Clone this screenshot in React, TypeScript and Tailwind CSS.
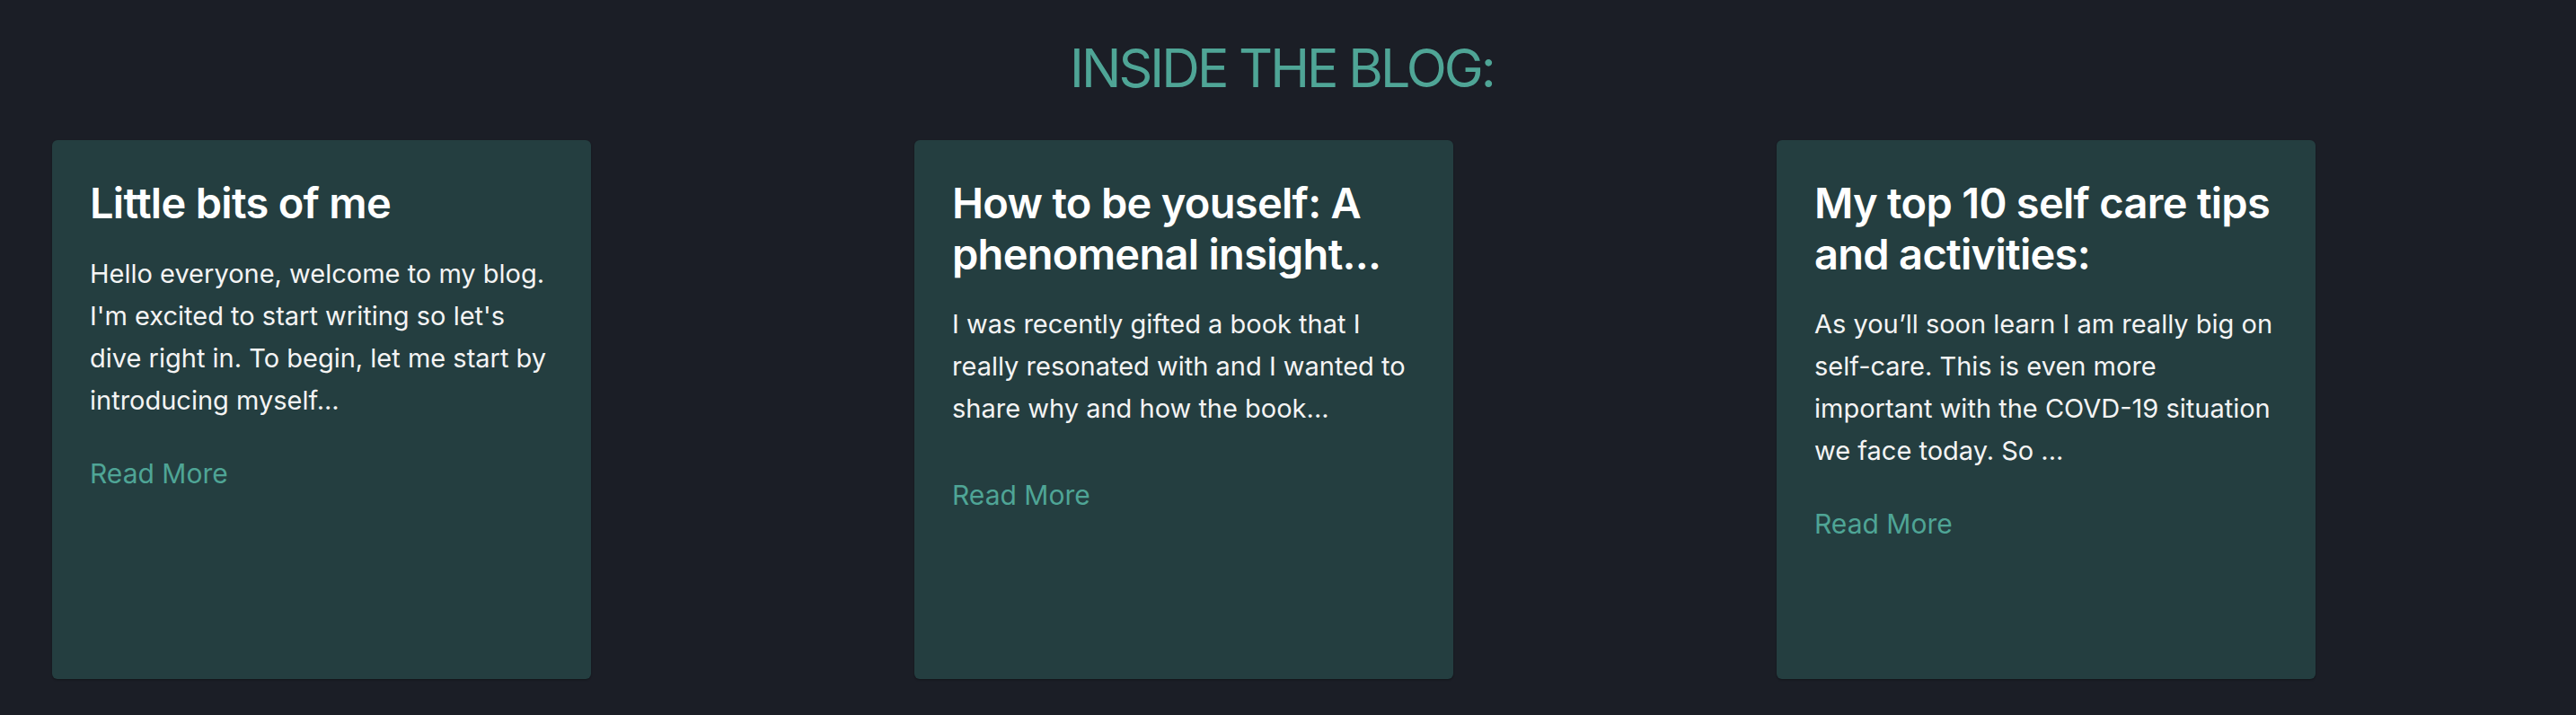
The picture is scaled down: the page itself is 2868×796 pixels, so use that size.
import React from 'react'

interface Post {
  id: number;
  title: string;
  excerpt: string;
  excerptClass: string;
}

const posts: Post[] = [
  {
    id: 1,
    title: "Little bits of me",
    excerpt:
      "Hello everyone, welcome to my blog. I'm excited to start writing so let's dive right in. To begin, let me start by introducing myself...",
    excerptClass: "mb-[36px]",
  },
  {
    id: 2,
    title: "How to be youself: A phenomenal insight...",
    excerpt:
      "I was recently gifted a book that I really resonated with and I wanted to share why and how the book...",
    excerptClass: "mb-[51px]",
  },
  {
    id: 3,
    title: "My top 10 self care tips and activities:",
    excerpt:
      "As you’ll soon learn I am really big on self-care. This is even more important with the COVD-19 situation we face today. So ...",
    excerptClass: "mb-[36px]",
  },
];

const App = () => {
  return (
    <div className="min-h-[796px] w-full overflow-hidden bg-[#1b1e26] pt-[46px] pb-[41px] font-['Inter','Noto_Sans',sans-serif]">
      <h2 className="pr-[14px] text-center text-[59px] leading-[60px] font-normal tracking-[-0.05em] text-[#4fa596]">
        INSIDE THE BLOG:
      </h2>
      <div className="mt-[50px] flex gap-[360px] pl-[58px]">
        {posts.map((post) => (
          <div
            key={post.id}
            className="flex h-[600px] w-[600px] shrink-0 flex-col rounded-md bg-[#243e40] pt-[42px] pr-[36px] pl-[42px] shadow-[0_1px_2px_rgba(0,0,0,0.35)]"
          >
            <h3 className="mb-[26px] text-[47px] leading-[56.5px] font-semibold tracking-[-0.015em] text-white">
              {post.title}
            </h3>
            <p className={`${post.excerptClass} pr-[6px] text-[29px] leading-[47px] text-[#f4f4f4]`}>
              {post.excerpt}
            </p>
            <a href="#" className="text-[30px] leading-[45px] text-[#4fa596]">
              Read More
            </a>
          </div>
        ))}
      </div>
    </div>
  );
};

export default App;
